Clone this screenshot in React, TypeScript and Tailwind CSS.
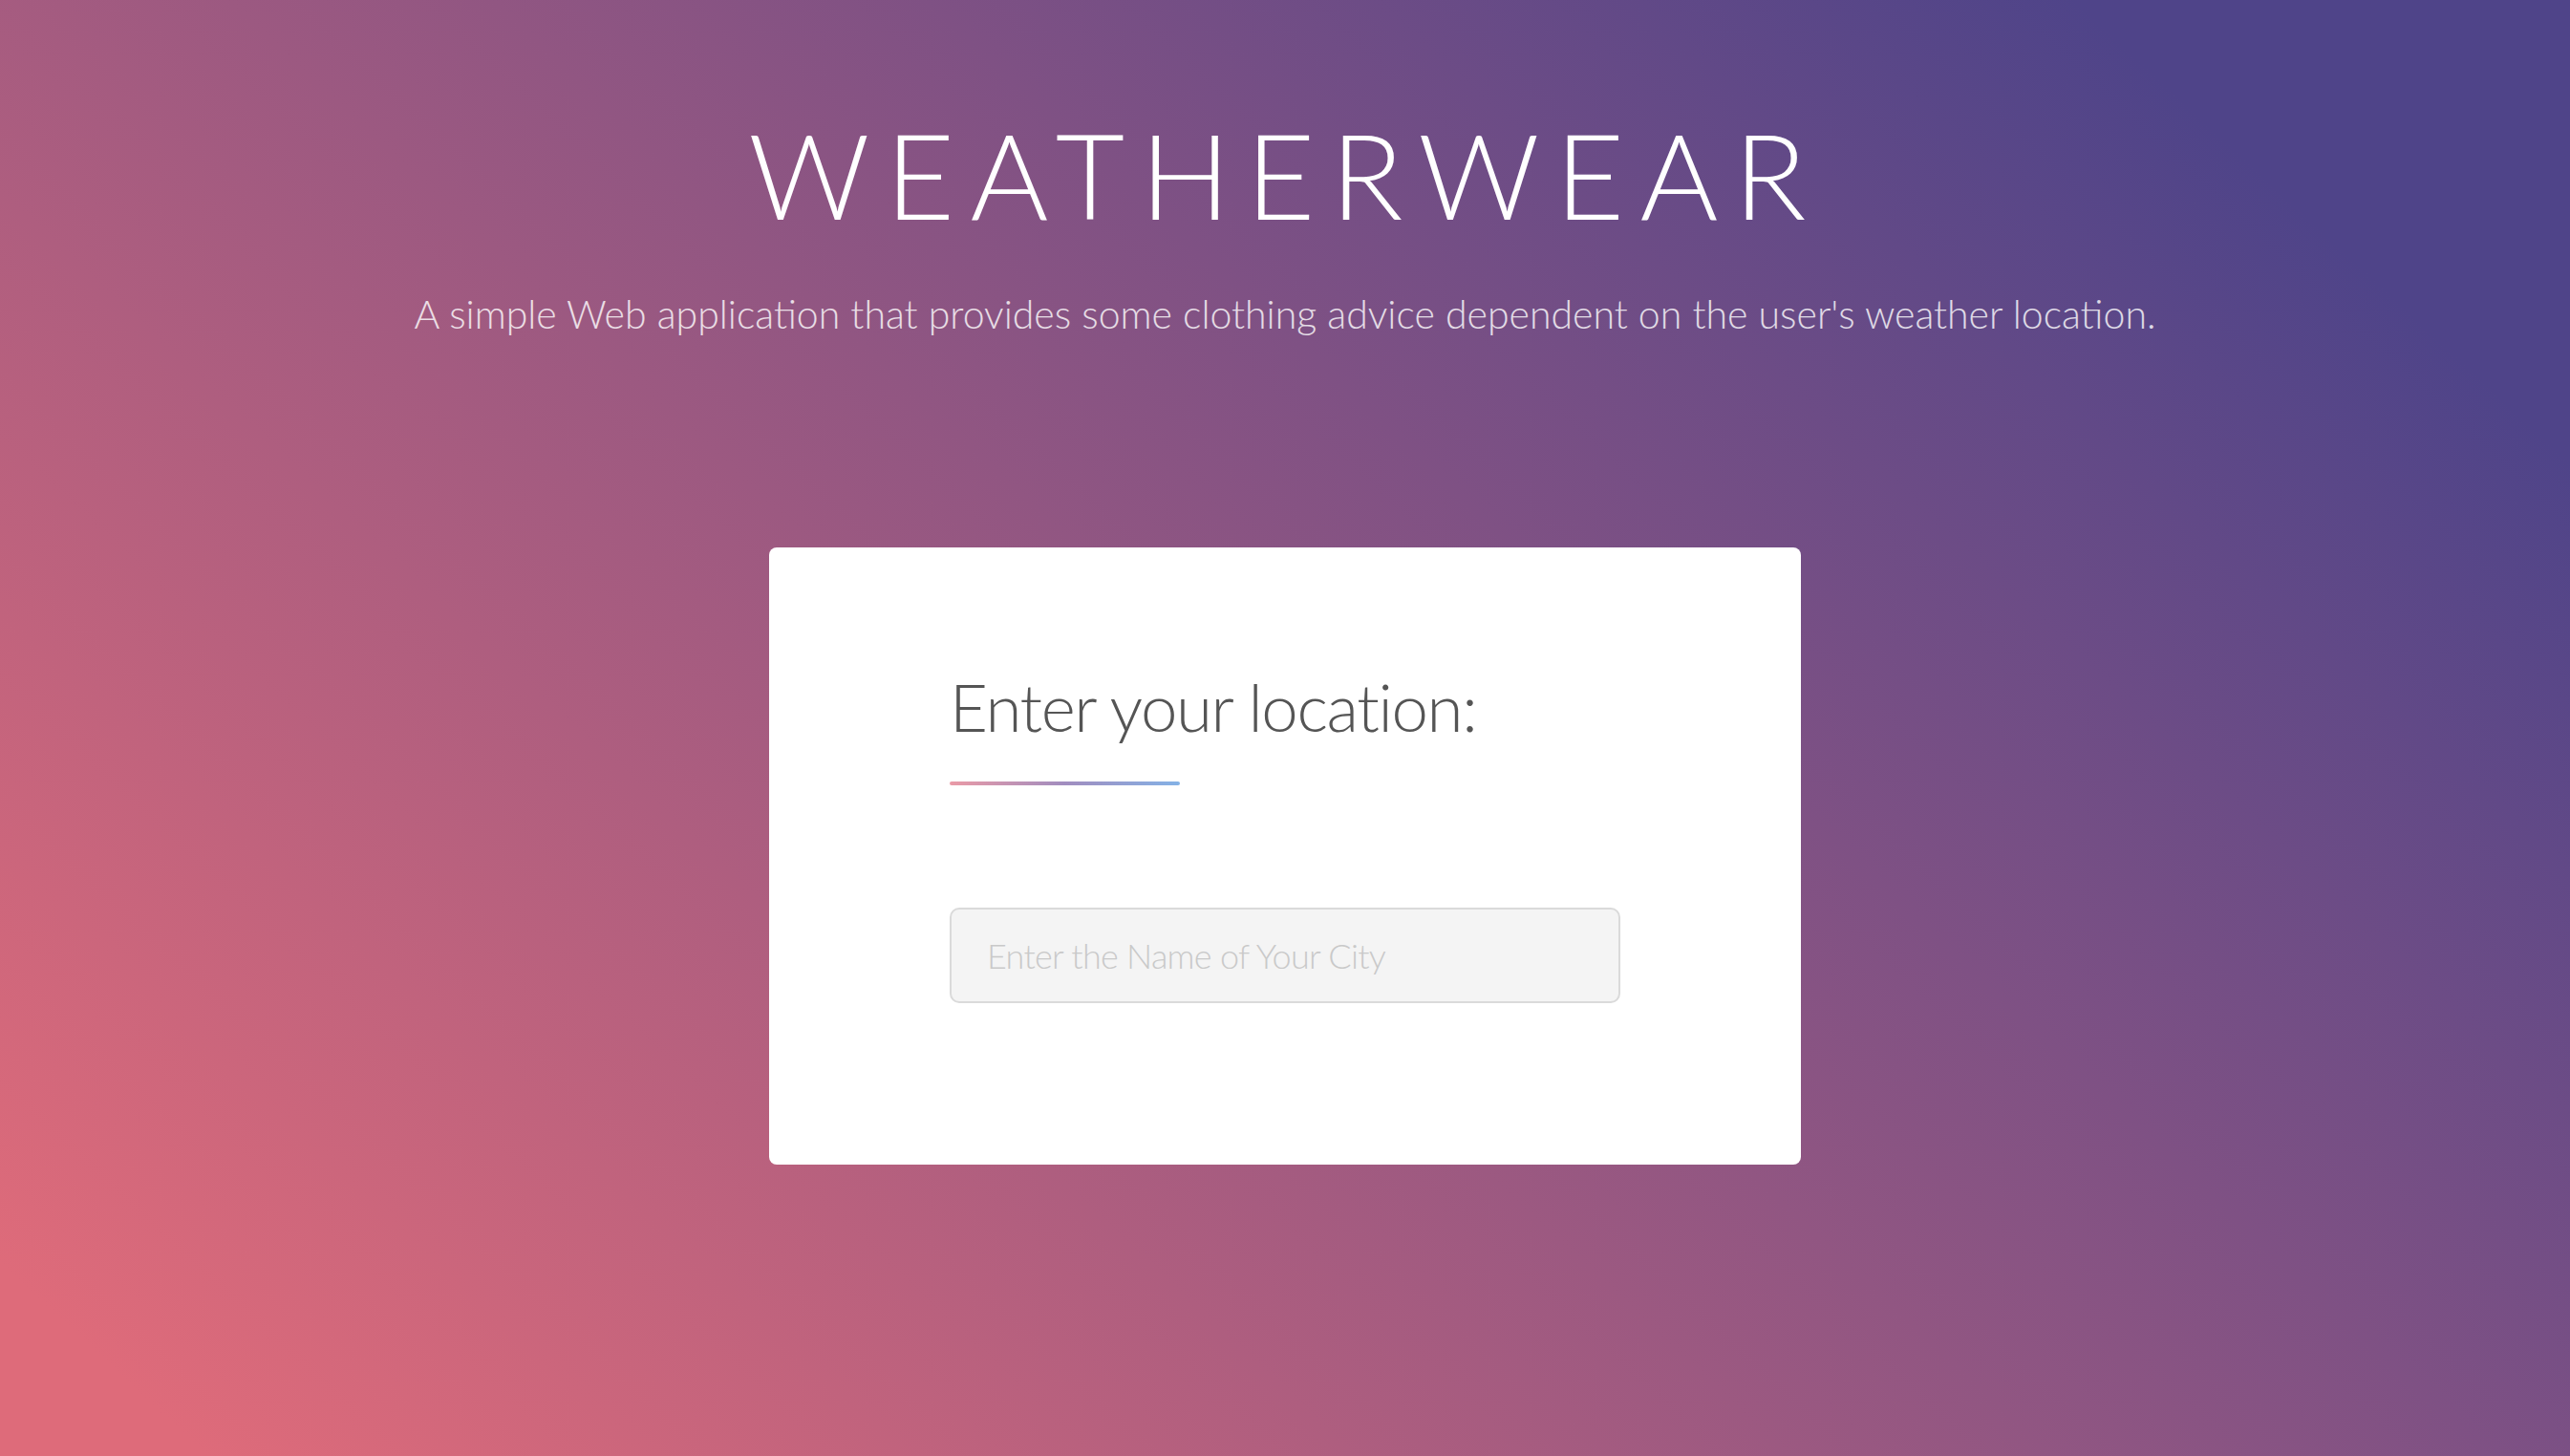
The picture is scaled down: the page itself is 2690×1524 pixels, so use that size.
import React, { useState } from 'react';

const App: React.FC = () => {
  const [city, setCity] = useState('');

  return (
    <div className="min-h-screen w-full bg-[linear-gradient(43deg,#de6b7a_5%,#4f4489_88%)] font-['Lato','Liberation_Sans',sans-serif]">
      <div className="flex flex-col items-center pt-[120px]">
        {/* Header */}
        <h1 className="text-[125px] leading-none font-light tracking-[0.13em] text-white">
          WEATHERWEAR
        </h1>
        <p className="mt-[63px] text-[41px] leading-none font-light text-white/80">
          A simple Web application that provides some clothing advice dependent on the user's weather location.
        </p>

        {/* Location card */}
        <div className="mt-[224px] w-[1080px] h-[646px] rounded-lg bg-white px-[189px] pt-[132px]">
          <h2 className="text-[69px] leading-none font-light tracking-[-0.02em] text-[#555555]">
            Enter your location:
          </h2>
          <div className="mt-[44px] h-[4px] w-[241px] rounded-full bg-[linear-gradient(to_right,#ea9aa6,#a18dbf,#84b2e6)]" />
          <input
            type="text"
            value={city}
            onChange={(e) => setCity(e.target.value)}
            placeholder="Enter the Name of Your City"
            className="mt-[128px] block w-[702px] h-[100px] rounded-[10px] border-2 border-[#dadada] bg-[#f4f4f4] px-[37px] text-[36px] tracking-[-0.02em] font-light text-[#555555] placeholder:text-[#c9c9c9] outline-none"
          />
        </div>
      </div>
    </div>
  );
};

export default App;
